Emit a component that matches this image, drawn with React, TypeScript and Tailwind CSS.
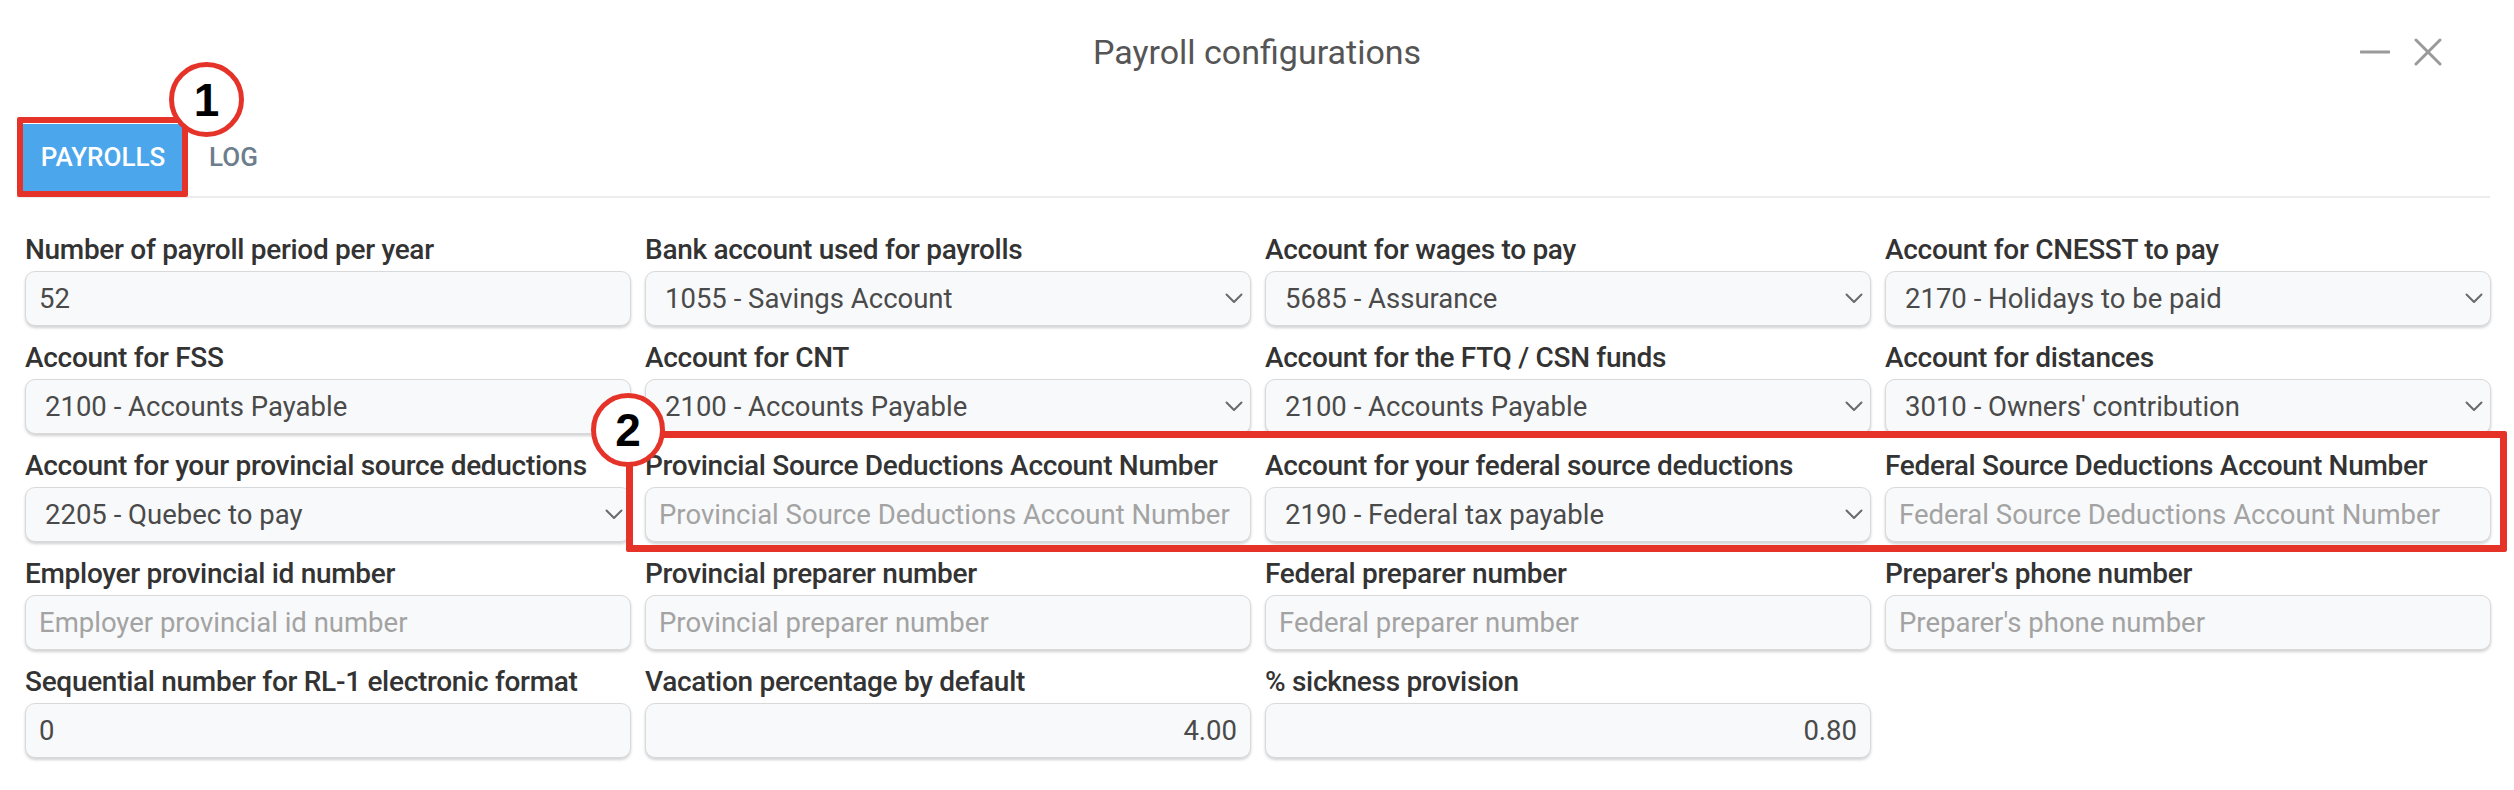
import React from 'react';

type Field = {
  label: string;
  kind: 'input' | 'select' | 'empty';
  value?: string;
  placeholder?: string;
  right?: boolean;
};

const fields: Field[] = [
  { label: 'Number of payroll period per year', kind: 'input', value: '52' },
  { label: 'Bank account used for payrolls', kind: 'select', value: '1055 - Savings Account' },
  { label: 'Account for wages to pay', kind: 'select', value: '5685 - Assurance' },
  { label: 'Account for CNESST to pay', kind: 'select', value: '2170 - Holidays to be paid' },
  { label: 'Account for FSS', kind: 'select', value: '2100 - Accounts Payable' },
  { label: 'Account for CNT', kind: 'select', value: '2100 - Accounts Payable' },
  { label: 'Account for the FTQ / CSN funds', kind: 'select', value: '2100 - Accounts Payable' },
  { label: 'Account for distances', kind: 'select', value: "3010 - Owners' contribution" },
  { label: 'Account for your provincial source deductions', kind: 'select', value: '2205 - Quebec to pay' },
  { label: 'Provincial Source Deductions Account Number', kind: 'input', placeholder: 'Provincial Source Deductions Account Number' },
  { label: 'Account for your federal source deductions', kind: 'select', value: '2190 - Federal tax payable' },
  { label: 'Federal Source Deductions Account Number', kind: 'input', placeholder: 'Federal Source Deductions Account Number' },
  { label: 'Employer provincial id number', kind: 'input', placeholder: 'Employer provincial id number' },
  { label: 'Provincial preparer number', kind: 'input', placeholder: 'Provincial preparer number' },
  { label: 'Federal preparer number', kind: 'input', placeholder: 'Federal preparer number' },
  { label: "Preparer's phone number", kind: 'input', placeholder: "Preparer's phone number" },
  { label: 'Sequential number for RL-1 electronic format', kind: 'input', value: '0' },
  { label: 'Vacation percentage by default', kind: 'input', value: '4.00', right: true },
  { label: '% sickness provision', kind: 'input', value: '0.80', right: true },
  { label: '', kind: 'empty' },
];

const boxClass =
  'h-[55px] w-full rounded-[10px] border border-[#d8d9db] bg-[#f8f9fa] shadow-[0_2px_3px_rgba(0,0,0,0.18)] text-[27.5px] text-[#4a4a4a] outline-none';

const Chevron = () => (
  <svg width="18" height="11" viewBox="0 0 18 11" fill="none" className="absolute right-[8px] top-[22px] pointer-events-none">
    <polyline points="1.5,1.5 9,9 16.5,1.5" stroke="#6a6a6a" strokeWidth="2" strokeLinecap="round" strokeLinejoin="round" />
  </svg>
);

const FormField: React.FC<{ field: Field }> = ({ field }) => {
  if (field.kind === 'empty') return <div />;
  return (
    <div className="flex flex-col">
      <label className="text-[28px] leading-[34px] font-medium text-[#333] whitespace-nowrap tracking-[-0.3px]">{field.label}</label>
      <div className="relative mt-[4px]">
        {field.kind === 'select' ? (
          <>
            <select className={`${boxClass} appearance-none pl-[19px] pr-[40px]`} defaultValue={field.value}>
              <option>{field.value}</option>
            </select>
            <Chevron />
          </>
        ) : (
          <input
            readOnly
            className={`${boxClass} px-[13px] placeholder:text-[#a3a3a3] ${field.right ? 'text-right' : ''}`}
            defaultValue={field.value}
            placeholder={field.placeholder}
          />
        )}
      </div>
    </div>
  );
};

export default function App() {
  return (
    <div className="relative w-[2514px] h-[790px] bg-white overflow-hidden" style={{ fontFamily: 'Roboto, "Liberation Sans", sans-serif' }}>
      {/* header */}
      <div className="h-[104px] grid grid-cols-[1fr_auto_1fr] items-center">
        <div />
        <h1 className="text-[34px] text-[#555] font-normal">Payroll configurations</h1>
        <div className="flex items-center justify-end gap-[24px] pr-[72px]">
          <svg width="30" height="4" viewBox="0 0 30 4">
            <line x1="1" y1="2" x2="29" y2="2" stroke="#9a9a9a" strokeWidth="3" strokeLinecap="round" />
          </svg>
          <svg width="28" height="28" viewBox="0 0 28 28">
            <line x1="2" y1="2" x2="26" y2="26" stroke="#9a9a9a" strokeWidth="3" strokeLinecap="round" />
            <line x1="26" y1="2" x2="2" y2="26" stroke="#9a9a9a" strokeWidth="3" strokeLinecap="round" />
          </svg>
        </div>
      </div>

      {/* tabs */}
      <div className="mt-[20px] ml-[17px] mr-[24px] flex items-center border-b-2 border-[#ececec] pb-[5px]">
        <div className="ml-[6px] h-[67px] w-[160px] bg-[#4ca6ec] flex items-center justify-center text-white text-[26px] font-medium">
          PAYROLLS
        </div>
        <div className="ml-[26px] text-[26px] font-medium text-[#6c7e8d]">LOG</div>
      </div>

      {/* form */}
      <div className="mt-[35px] pl-[25px] pr-[23px] grid grid-cols-4 gap-x-[14px] gap-y-[15px]">
        {fields.map((f, i) => (
          <FormField key={i} field={f} />
        ))}
      </div>

      {/* annotations */}
      <div className="absolute left-[17px] top-[117px] w-[171px] h-[80px] border-[6px] border-[#e5332a] rounded-[2px]" />
      <div className="absolute left-[169px] top-[62px] w-[75px] h-[75px] rounded-full border-[5px] border-[#e5332a] bg-white flex items-center justify-center">
        <span className="text-[46px] font-bold text-black leading-none" style={{ fontFamily: '"Liberation Sans", Arial, sans-serif' }}>1</span>
      </div>

      <div className="absolute left-[626px] top-[431px] w-[1881px] h-[121px] border-[7px] border-[#e5332a] rounded-[2px]" />
      <div className="absolute left-[591px] top-[393px] w-[74px] h-[74px] rounded-full border-[5px] border-[#e5332a] bg-white flex items-center justify-center">
        <span className="text-[46px] font-bold text-black leading-none" style={{ fontFamily: '"Liberation Sans", Arial, sans-serif' }}>2</span>
      </div>
    </div>
  );
}
